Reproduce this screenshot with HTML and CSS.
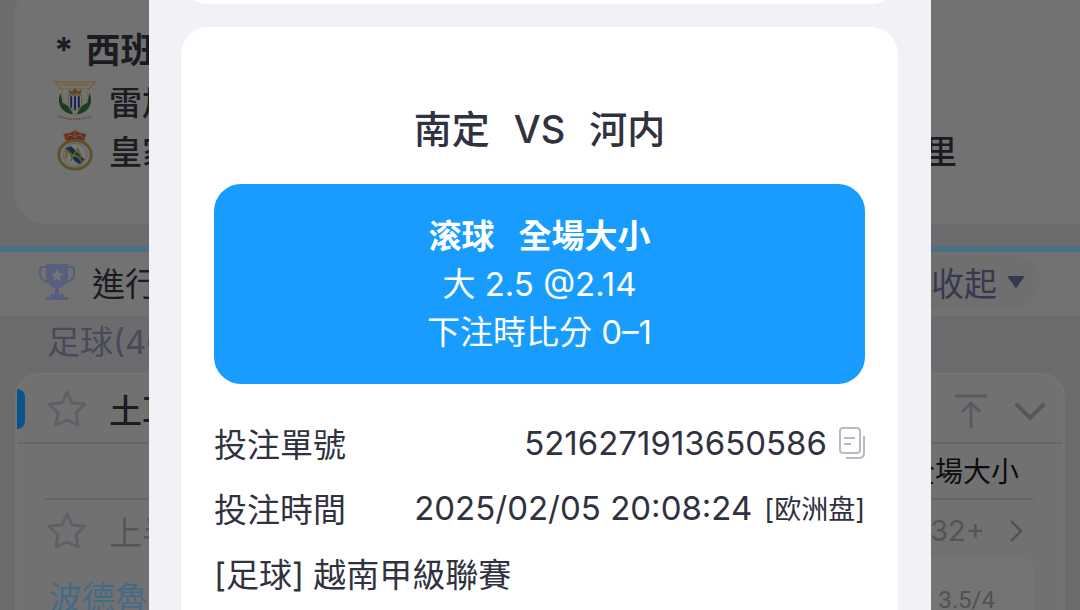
FILE: index.html
```
<!DOCTYPE html>
<html lang="zh-Hant">
<head>
    <meta charset="UTF-8">
    <meta name="viewport" content="width=device-width, initial-scale=1.0">
    <title>投注單號</title>
    <link rel="stylesheet" href="styles.css">
</head>
<body>
    <main class="page">
        <section class="matchCard">
            <h2><span>*</span><span>西班</span></h2>
            <div class="team">
                <svg class="crest" viewBox="0 0 44 44">
                    <path d="M1 2H43L37 9H7Z" fill="#74736a" stroke="#746039" stroke-width="1.5"/>
                    <path d="M8 5H36" stroke="#6d603f" stroke-width="2" stroke-dasharray="2 1"/>
                    <path d="M8 9H36L32 31L22 37L12 31Z" fill="#747370" stroke="#74664a"/>
                    <path d="M7 14C2 24 8 35 20 36C17 29 13 25 9 24ZM37 14C42 24 36 35 24 36C27 29 31 25 35 24Z" fill="#183d20"/>
                    <path d="M15 16H29V27Q27 31 22 32Q17 31 15 27Z" fill="#777779" stroke="#5b553d"/>
                    <path d="M18 17V29M22 17V31M26 17V29" stroke="#17204c" stroke-width="2"/>
                    <path d="M16 15L15 10L19 12L22 8L25 12L29 10L28 15Z" fill="#63471e"/>
                    <path d="M5 38Q22 44 39 38" fill="none" stroke="#66504a" stroke-width="2" stroke-dasharray="2 1"/>
                </svg>
                <span>雷加</span>
            </div>
            <div class="team">
                <svg class="crest" viewBox="0 0 44 44">
                    <path d="M12 12L10 5L17 4L22 1L27 4L34 5L32 12Z" fill="#672c29" stroke="#766033"/>
                    <path d="M13 9Q17 4 22 9Q27 4 31 9M22 0V8" fill="none" stroke="#776339" stroke-width="1"/>
                    <path d="M12 13H32" stroke="#6e5728" stroke-width="3"/>
                    <ellipse cx="22" cy="27" rx="17" ry="15" fill="#717377" stroke="#5c5128" stroke-width="3"/>
                    <circle cx="22" cy="27" r="12" fill="#76777a" stroke="#686044"/>
                    <path d="M12 20L18 18L32 32L27 37L22 34Z" fill="#162c51"/>
                    <path d="M13 31V22L20 28L25 21L29 30M17 34Q22 22 29 34" fill="none" stroke="#5e6125" stroke-width="2"/>
                </svg>
                <span>皇家</span>
                <span class="awayName">里</span>
            </div>
        </section>

        <section class="sectionBar">
            <svg class="trophy" viewBox="0 0 36 38">
                <path d="M8 4H3Q1 4 1 7V11Q1 18 10 19M28 4H33Q35 4 35 7V11Q35 18 26 19" fill="none" stroke="#56607e" stroke-width="2"/>
                <path d="M7 1H29V14Q28 23 20 25V31H25V34H29V37H7V34H11V31H16V25Q8 23 7 14Z" fill="#56607e"/>
                <path d="M18 6L20 10L24 11L21 14L22 18L18 16L14 18L15 14L12 11L16 10Z" fill="#727479"/>
            </svg>
            <span class="sectionTitle">進行</span>
            <button class="collapseBtn">收起
                <svg class="caret" viewBox="0 0 18 13"><path d="M2 1H16L9 11Z" fill="#36384f" stroke="#36384f" stroke-width="2" stroke-linejoin="round"/></svg>
            </button>
        </section>

        <h3 class="sportTitle">足球(40</h3>

        <section class="league">
            <header class="leagueHeader">
                <i class="marker"></i>
                <svg class="star" viewBox="0 0 40 40"><path d="M20 3L25 14L38 15L29 24L31 36L20 31L9 36L11 24L2 15L15 14Z"/></svg>
                <span>土耳</span>
                <svg class="toTop" viewBox="0 0 32 36"><path d="M1 3H31M16 34V11M8 18L16 10L24 18"/></svg>
                <svg class="chevron" viewBox="0 0 30 20"><path d="M2 3L15 16L28 3"/></svg>
            </header>
            <div class="leagueBody">
                <div class="market">全場大小</div>
                <div class="matchRow">
                    <svg class="star" viewBox="0 0 40 40"><path d="M20 3L25 14L38 15L29 24L31 36L20 31L9 36L11 24L2 15L15 14Z"/></svg>
                    <span>上半</span>
                    <a href="#" class="more">32+ <svg class="arrow" viewBox="0 0 14 24"><path d="M2 2L12 12L2 22"/></svg></a>
                </div>
                <div class="oddsRow">
                    <span class="homeName">波德魯</span>
                    <button class="odds">大 3.5/4</button>
                </div>
            </div>
        </section>
    </main>

    <div class="overlay">
        <div class="dialog" role="dialog">
            <div class="card cardPrev"></div>
            <section class="card betCard">
                <h1><span>南定</span><span>VS</span><span>河内</span></h1>
                <div class="betBox">
                    <strong><span>滚球</span><span>全場大小</span></strong>
                    <p>大 2.5 @2.14</p>
                    <p>下注時比分 0–1</p>
                </div>
                <dl>
                    <div class="row">
                        <dt>投注單號</dt>
                        <dd>5216271913650586
                            <button class="copyBtn" aria-label="複製">
                                <svg viewBox="0 0 26 32"><path d="M4 1H18Q21 1 21 4V23Q21 26 18 26H4Q1 26 1 23V4Q1 1 4 1ZM5 11H16M5 17H12" /><path d="M25 9V26Q25 31 20 31H7"/></svg>
                            </button>
                        </dd>
                    </div>
                    <div class="row">
                        <dt>投注時間</dt>
                        <dd>2025/02/05 20:08:24 <small>[欧洲盘]</small></dd>
                    </div>
                </dl>
                <div class="row">[足球] 越南甲級聯賽</div>
            </section>
        </div>
    </div>
</body>
</html>
```

FILE: styles.css
```
* {
    box-sizing: border-box;
}

body {
    margin: 0;
    height: 100vh;
    overflow: hidden;
    background-color: #6c6c6f;
    color: #1b1c22;
    font-family: Inter, "Noto Sans CJK TC", sans-serif;
    font-size: 33px;
}

h1, h2, h3, p, dl, dd {
    margin: 0;
}

button {
    border: none;
    padding: 0;
    background: none;
    color: inherit;
    font: inherit;
    cursor: pointer;
}

svg {
    display: block;
    flex: none;
    fill: none;
}

.page {
    height: 100%;
    overflow: hidden;
}

/* match card */
.matchCard {
    height: 240px;
    margin: -16px 0 22px 14px;
    padding: 40px 0 0 40px;
    border-radius: 32px 0 0 32px;
    background-color: #727272;
}

.matchCard h2 {
    display: flex;
    gap: 12px;
    font-size: 35px;
    line-height: 52px;
    font-weight: 700;
}

.team {
    display: flex;
    align-items: center;
    gap: 13px;
    height: 49px;
    font-size: 33px;
    font-weight: 500;
}

.crest {
    width: 42px;
    height: 42px;
}

.awayName {
    margin-left: auto;
    margin-right: 123px;
}

/* section bar */
.sectionBar {
    display: flex;
    align-items: center;
    height: 70px;
    padding: 0 40px 4px 39px;
    border-top: 6px solid #4b7084;
    background-color: #727272;
}

.trophy {
    width: 36px;
    height: 38px;
    margin-right: 17px;
}

.collapseBtn {
    display: flex;
    align-items: center;
    gap: 10px;
    height: 54px;
    margin-left: auto;
    padding: 0 15px 0 32px;
    border-radius: 27px;
    background-color: #6f6f70;
    color: #36384f;
}

.caret {
    width: 18px;
    height: 13px;
}

.sportTitle {
    padding-left: 47px;
    line-height: 52px;
    margin-bottom: 5px;
    font-size: 33px;
    font-weight: 400;
    color: #484959;
}

/* league */
.league {
    margin: 0 15px;
    border: 2px solid #747475;
    border-radius: 24px;
    background-color: #717172;
}

.leagueHeader {
    display: flex;
    align-items: center;
    height: 69px;
    padding-right: 18px;
    border-bottom: 2px solid #67676b;
    font-weight: 500;
}

.marker {
    width: 8px;
    height: 40px;
    margin-right: 22px;
    border-radius: 0 8px 8px 0;
    background-color: #07548a;
}

.star {
    width: 40px;
    height: 40px;
    margin-right: 22px;
    stroke: #5f5f67;
    stroke-width: 3;
    stroke-linejoin: round;
}

.toTop {
    width: 32px;
    height: 36px;
    margin: 4px 28px 0 auto;
    stroke: #5a5a60;
    stroke-width: 3;
    stroke-linecap: round;
}

.chevron {
    width: 30px;
    height: 20px;
    margin-top: 6px;
    stroke: #56565b;
    stroke-width: 4;
    stroke-linecap: round;
}

.leagueBody {
    padding: 0 29px 0 27px;
}

.market {
    height: 56px;
    padding-right: 15px;
    border-bottom: 2px solid #67676b;
    line-height: 56px;
    font-size: 28px;
    text-align: right;
    color: #0c0c0e;
}

.matchRow {
    display: flex;
    align-items: center;
    height: 57px;
    padding-top: 4px;
    padding-left: 3px;
    color: #55555e;
}

.more {
    display: flex;
    align-items: center;
    gap: 24px;
    margin-left: auto;
    padding-right: 11px;
    color: #535359;
    font-size: 29px;
    text-decoration: none;
}

.arrow {
    width: 14px;
    height: 24px;
    stroke: #4d4d55;
    stroke-width: 2;
}

.oddsRow {
    display: flex;
    justify-content: space-between;
    height: 82px;
    padding-left: 5px;
}

.homeName {
    line-height: 82px;
    color: #446b86;
}

.odds {
    padding: 0 39px 2px;
    border-radius: 12px;
    background-color: #747474;
    color: #515157;
    font-family: Roboto, "Noto Sans CJK TC", sans-serif;
    font-size: 24px;
}

/* bet detail dialog */
.overlay {
    position: fixed;
    inset: 0;
    display: flex;
    padding: 0 149px;
}

.dialog {
    display: flex;
    flex: 1;
    flex-direction: column;
    gap: 23px;
    padding: 0 33px 0 32px;
    background-color: #f1f1f6;
    overflow: hidden;
}

.card {
    border-radius: 27px;
    background-color: #fff;
}

.cardPrev {
    flex: none;
    height: 60px;
    margin-top: -56px;
}

.betCard {
    flex: 1 0 auto;
    padding: 74px 33px 0;
    border-radius: 27px 27px 0 0;
    color: #303240;
}

.betCard h1 {
    display: flex;
    justify-content: center;
    gap: 24px;
    margin-bottom: 27px;
    font-size: 38px;
    line-height: 56px;
    font-weight: 500;
}

.betBox {
    margin-bottom: 26px;
    padding: 28px 0;
    border-radius: 27px;
    background-color: #189cff;
    color: #fff;
    line-height: 48px;
    text-align: center;
}

.betBox strong {
    display: flex;
    justify-content: center;
    gap: 24px;
    font-weight: 700;
}

.row {
    display: flex;
    align-items: center;
    justify-content: space-between;
    height: 65px;
}

.row dd {
    display: flex;
    align-items: center;
    gap: 12px;
}

.row small {
    font-size: 27px;
}

.copyBtn svg {
    width: 26px;
    height: 32px;
    stroke: #b9bac9;
    stroke-width: 2;
}
```
